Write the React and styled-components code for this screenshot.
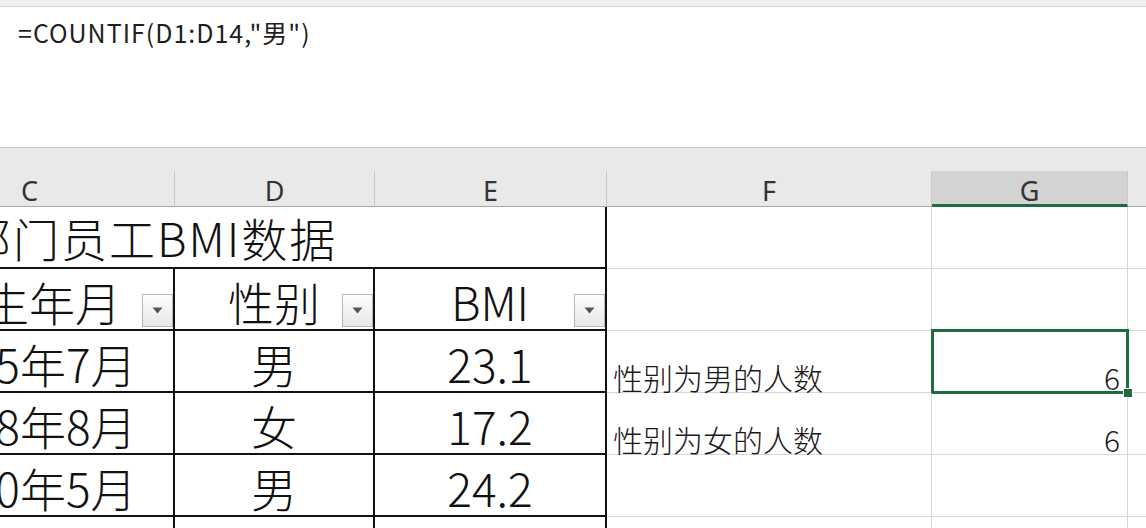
import React from 'react';
import styled, { createGlobalStyle, css } from 'styled-components';

const GlobalStyle = createGlobalStyle`
  html, body {
    margin: 0;
    padding: 0;
    background: #fff;
  }
  body {
    overflow: hidden;
    font-family: "Noto Sans CJK SC", "Noto Sans", sans-serif;
    color: #111;
  }
`;

const Window = styled.div`
  width: 1146px;
  height: 528px;
  overflow: hidden;
  display: flex;
  flex-direction: column;
  background: #fff;
`;

const TopStrip = styled.div`
  flex: none;
  height: 6px;
  background: #f0f0f0;
  border-bottom: 1px solid #d4d4d4;
`;

const FormulaBar = styled.div`
  flex: none;
  height: 141px;
  box-sizing: border-box;
  padding: 10px 18px;
  font-size: 25px;
  letter-spacing: 1px;
  line-height: 1.2;
  color: #1f1f1f;
  border-bottom: 1px solid #c6c6c6;
`;

const HeaderGap = styled.div`
  flex: none;
  height: 23px;
  background: #e9e9e9;
`;

const Viewport = styled.div`
  flex: 1;
  overflow: hidden;
`;

// scrolled so that column C is partly out of view
const Sheet = styled.div`
  display: grid;
  grid-template-columns: 290px 200px 232px 325px 196px 160px;
  grid-template-rows: 36px;
  grid-auto-rows: 62px;
  margin-left: -115px;
  width: max-content;
`;

const ColHead = styled.div`
  box-sizing: border-box;
  display: flex;
  align-items: center;
  justify-content: center;
  padding-top: 4px;
  background: #e9e9e9;
  border-right: 1px solid #c8c8c8;
  border-bottom: 1px solid #a8a8a8;
  font-family: "Noto Sans", sans-serif;
  font-size: 27px;
  color: #333;

  ${(p) =>
    p.$active &&
    css`
      background: #d3d3d3;
      border-bottom: 3px solid #1e6b42;
      padding-top: 6px;
    `}
`;

const TableCell = styled.div`
  box-sizing: border-box;
  display: flex;
  align-items: center;
  justify-content: center;
  padding-top: 4px;
  border-right: 2px solid #111;
  border-bottom: 2px solid #111;
  font-size: 46px;
  font-weight: 300;
  line-height: 46px;
  white-space: nowrap;
  overflow: hidden;
`;

const TitleCell = styled(TableCell)`
  grid-column: span 3;
  justify-content: flex-start;
  padding: 0 0 0 80px;
  letter-spacing: 2px;
`;

const HeadCell = styled(TableCell)`
  display: grid;
  grid-template-columns: 1fr;
  grid-template-rows: 1fr;
  justify-content: stretch;
  align-items: stretch;
  padding-top: 0;
`;

const HeadLabel = styled.span`
  grid-area: 1 / 1;
  justify-self: center;
  align-self: center;
  padding-top: 4px;
`;

const FilterButton = styled.div`
  grid-area: 1 / 1;
  justify-self: end;
  align-self: end;
  box-sizing: border-box;
  width: 31px;
  height: 33px;
  margin: 0 0 2px 0;
  display: flex;
  align-items: center;
  justify-content: center;
  border: 1px solid #b9b9b9;
  background: linear-gradient(#fdfdfd, #e8e8e8);
`;

const GridCell = styled.div`
  box-sizing: border-box;
  position: relative;
  display: flex;
  align-items: flex-end;
  justify-content: ${(p) => (p.$right ? 'flex-end' : 'flex-start')};
  padding: ${(p) => (p.$right ? '0 7px 0 0' : '0 0 0 6px')};
  border-right: 1px solid #d6d6d6;
  border-bottom: 1px solid #d6d6d6;
  font-size: 30px;
  font-weight: 300;
  line-height: 30px;
  color: #1a1a1a;
  white-space: nowrap;

  ${(p) =>
    p.$selected &&
    css`
      &::after {
        content: '';
        position: absolute;
        top: -2px;
        left: -1px;
        right: -2px;
        bottom: -2px;
        border: 3px solid #1e6b42;
        pointer-events: none;
      }
      &::before {
        content: '';
        position: absolute;
        right: -6px;
        bottom: -6px;
        width: 8px;
        height: 8px;
        background: #1e6b42;
        border: 1px solid #fff;
        z-index: 2;
      }
    `}
`;

const Arrow = () => (
  <svg width="11" height="7" viewBox="0 0 11 7">
    <polygon points="0.5,0.5 10.5,0.5 5.5,6.5" fill="#555" />
  </svg>
);

const columns = ['C', 'D', 'E', 'F', 'G', ''];

const rows = [
  { birth: '1985年7月', sex: '男', bmi: '23.1', label: '性别为男的人数', count: '6', selected: true },
  { birth: '1988年8月', sex: '女', bmi: '17.2', label: '性别为女的人数', count: '6' },
  { birth: '1990年5月', sex: '男', bmi: '24.2' },
  {},
];

const App = () => {
  return (
    <Window>
      <GlobalStyle />
      <TopStrip />
      <FormulaBar>=COUNTIF(D1:D14,"男")</FormulaBar>
      <HeaderGap />
      <Viewport>
        <Sheet>
          {columns.map((c) => (
            <ColHead key={c || 'H'} $active={c === 'G'}>
              {c}
            </ColHead>
          ))}

          <TitleCell>部门员工BMI数据</TitleCell>
          <GridCell />
          <GridCell />
          <GridCell />

          {['出生年月', '性别', 'BMI'].map((h) => (
            <HeadCell key={h}>
              <HeadLabel>{h}</HeadLabel>
              <FilterButton>
                <Arrow />
              </FilterButton>
            </HeadCell>
          ))}
          <GridCell />
          <GridCell />
          <GridCell />

          {rows.map((r, i) => (
            <React.Fragment key={i}>
              <TableCell>{r.birth}</TableCell>
              <TableCell>{r.sex}</TableCell>
              <TableCell>{r.bmi}</TableCell>
              <GridCell>{r.label}</GridCell>
              <GridCell $right $selected={r.selected}>
                {r.count}
              </GridCell>
              <GridCell />
            </React.Fragment>
          ))}
        </Sheet>
      </Viewport>
    </Window>
  );
};

export default App;
